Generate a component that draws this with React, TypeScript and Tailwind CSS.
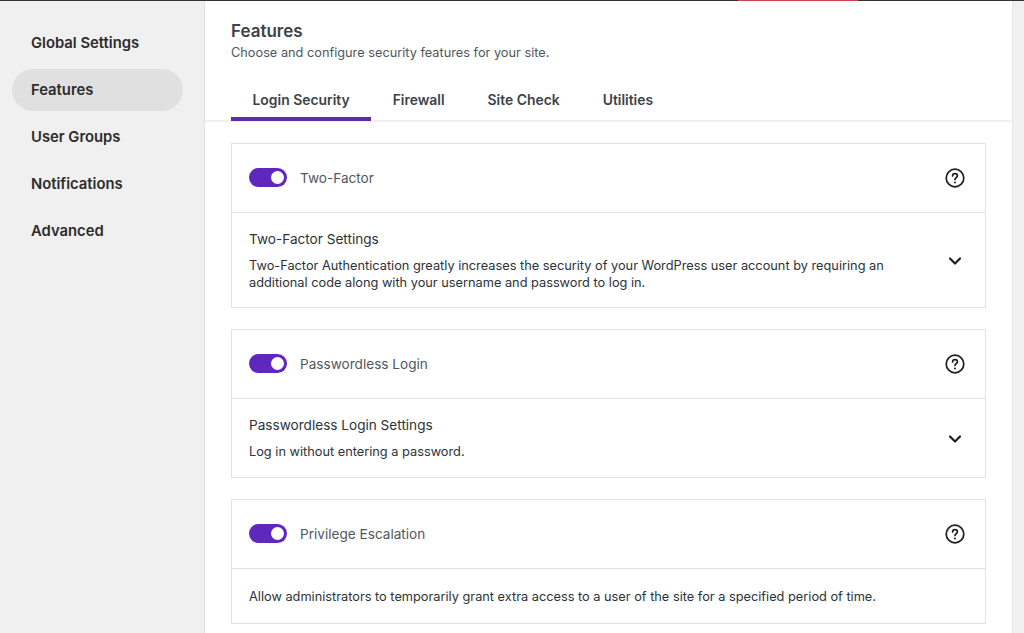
import { ChevronDown } from 'lucide-react'

const navItems = ['Global Settings', 'Features', 'User Groups', 'Notifications', 'Advanced']
const tabs = ['Login Security', 'Firewall', 'Site Check', 'Utilities']

function Toggle() {
  return (
    <div className="flex h-[19px] w-[38px] items-center justify-end rounded-full bg-[#5f27bd] pr-[3px]">
      <div className="h-[13px] w-[13px] rounded-full bg-white" />
    </div>
  )
}

function HelpIcon() {
  return (
    <svg width="20" height="20" viewBox="0 0 20 20" fill="none" stroke="#1e1e1e" strokeWidth="1.7">
      <circle cx="10" cy="10" r="8.8" />
      <path d="M7.6 8c0-1.4 1-2.3 2.4-2.3s2.4.9 2.4 2.1c0 1.9-2.4 1.9-2.4 3.7" strokeLinecap="round" />
      <circle cx="10" cy="14.4" r="1" fill="#1e1e1e" stroke="none" />
    </svg>
  )
}

function FeatureCard({
  name,
  title,
  description,
  bodyClass,
}: {
  name: string
  title?: string
  description: React.ReactNode
  bodyClass: string
}) {
  return (
    <div className="border border-[#e2e2e2] bg-white">
      <div className="flex h-[69px] items-center justify-between border-b border-[#e2e2e2] pl-[17px] pr-[20px]">
        <div className="flex items-center gap-[13px]">
          <Toggle />
          <span className="text-[13.6px] text-[#50575e]">{name}</span>
        </div>
        <HelpIcon />
      </div>
      <div className={`flex items-center justify-between pl-[17px] pr-[20px] ${bodyClass}`}>
        <div className="w-[660px]">
          {title && <div className="mb-[8px] text-[13.6px] leading-[20px] text-[#2c3338]">{title}</div>}
          <p className="text-[12.78px] leading-[17.5px] text-[#2c3338]">{description}</p>
        </div>
        {title && <ChevronDown className="mt-[2px] h-5 w-5 text-[#1e1e1e]" strokeWidth={2.6} />}
      </div>
    </div>
  )
}

export default function App() {
  return (
    <div className="flex h-[633px] w-[1024px] flex-col overflow-hidden bg-[#f0f0f0] font-['Inter',sans-serif]">
      <div className="flex h-px shrink-0 bg-[#333]">
        <div className="ml-[738px] w-[120px] bg-[#c9454b]" />
      </div>
      <div className="flex min-h-0 flex-1">
        <nav className="flex w-[205px] shrink-0 flex-col gap-[5px] border-r border-[#e2e2e2] pl-[12px] pr-[21px] pt-[21px]">
          {navItems.map((item) => (
            <div
              key={item}
              className={`flex h-[42px] items-center rounded-full pl-[19px] pt-[1px] text-[14.8px] font-semibold text-[#2c2c2c] ${
                item === 'Features' ? 'bg-[#e0e0e0]' : ''
              }`}
            >
              {item}
            </div>
          ))}
        </nav>

        <main className="w-[807px] shrink-0 overflow-hidden bg-white">
          <header className="h-[121px] border-b-2 border-[#f0f0f0] px-[26px] pt-[20px]">
            <h1 className="text-[17px] font-semibold leading-[20px] text-[#3c434a]">Features</h1>
            <p className="mt-[2px] text-[12.75px] leading-[20px] text-[#50575e]">
              Choose and configure security features for your site.
            </p>
            <div className="mt-[17px] flex">
              {tabs.map((tab, i) => (
                <div
                  key={tab}
                  className={`flex h-[41px] items-center px-[21.5px] pt-[3px] text-[13.9px] font-semibold text-[#3c434a] ${
                    i === 0 ? 'border-b-4 border-[#5b2ea6]' : 'pb-[4px]'
                  }`}
                >
                  {tab}
                </div>
              ))}
            </div>
          </header>

          <div className="flex flex-col gap-[21px] px-[26px] pt-[21px]">
            <FeatureCard
              name="Two-Factor"
              title="Two-Factor Settings"
              bodyClass="h-[94px]"
              description="Two-Factor Authentication greatly increases the security of your WordPress user account by requiring an additional code along with your username and password to log in."
            />
            <FeatureCard
              name="Passwordless Login"
              title="Passwordless Login Settings"
              bodyClass="h-[78px]"
              description="Log in without entering a password."
            />
            <FeatureCard
              name="Privilege Escalation"
              bodyClass="h-[54px] pt-[1px]"
              description={
                <span className="whitespace-nowrap">
                  Allow administrators to temporarily grant extra access to a user of the site for a specified period of time.
                </span>
              }
            />
          </div>
        </main>

        <div className="flex-1 border-l border-[#e8e8e8] bg-[#f0f0f0]" />
      </div>
    </div>
  )
}
